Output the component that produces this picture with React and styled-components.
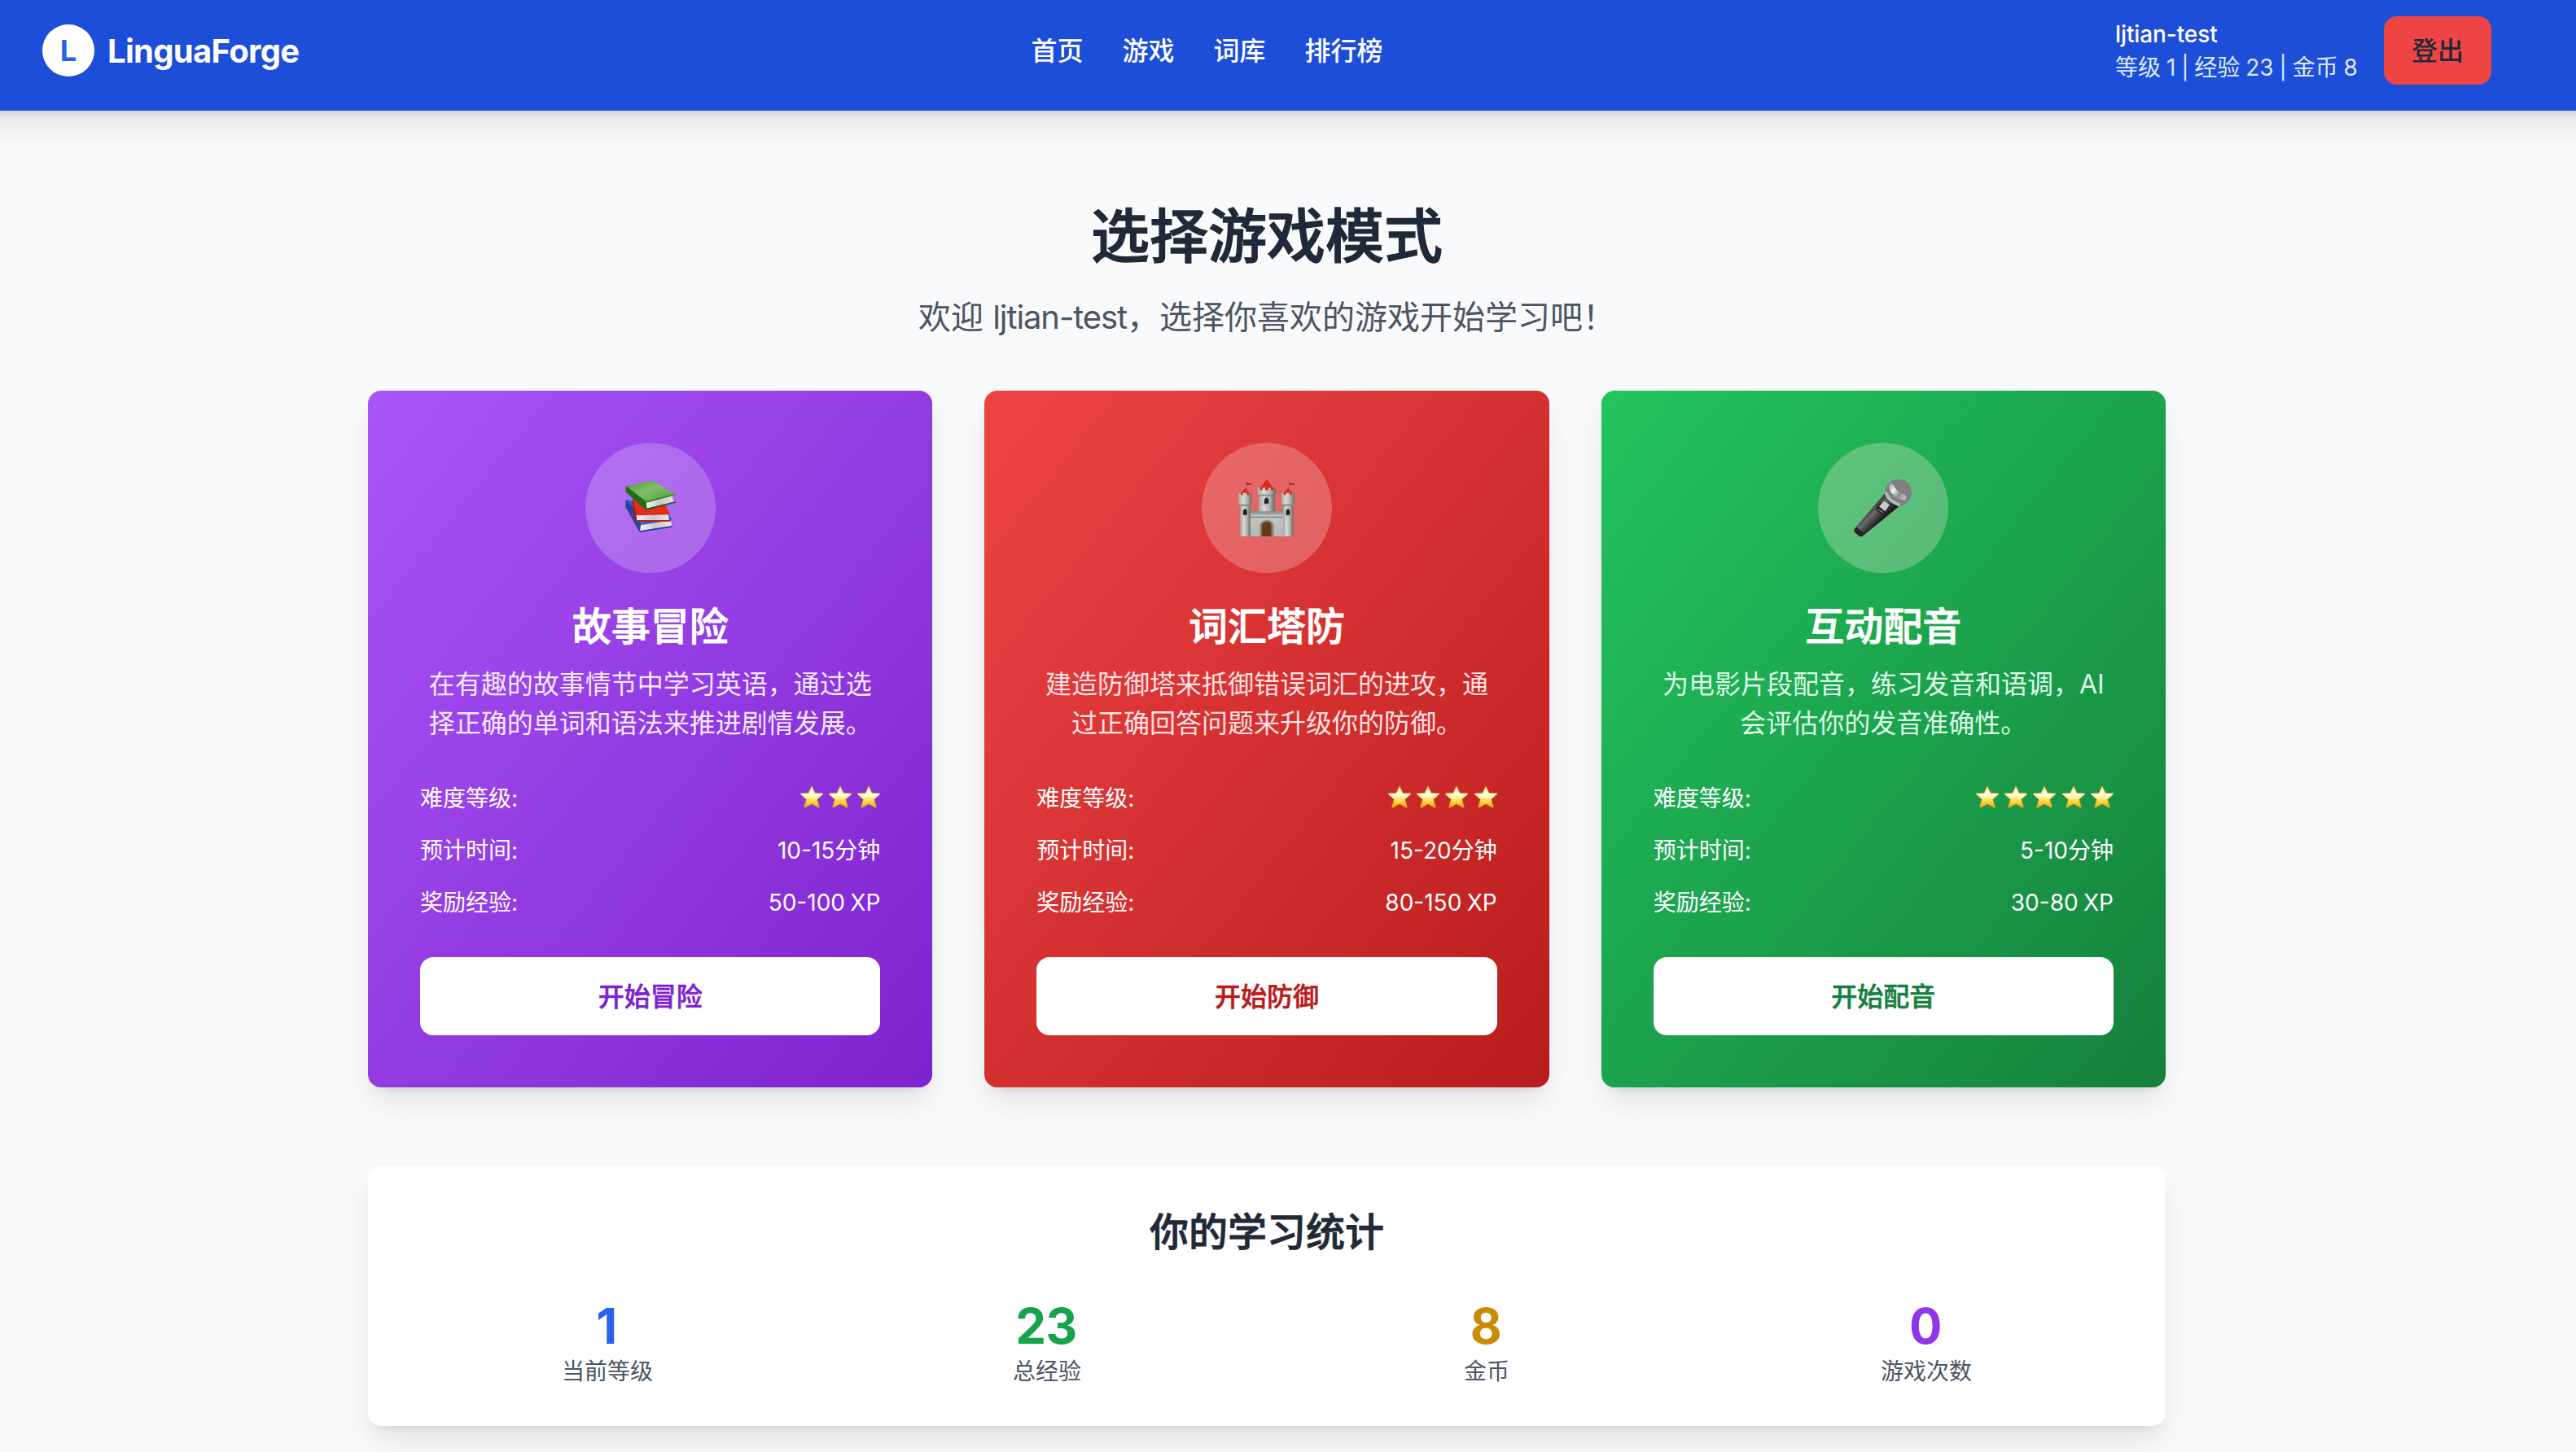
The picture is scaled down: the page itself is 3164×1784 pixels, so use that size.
import React from "react";
import styled, { createGlobalStyle, css } from "styled-components";

const GlobalStyle = createGlobalStyle`
  *, *::before, *::after { box-sizing: border-box; }
  html, body { margin: 0; padding: 0; }
  body {
    background: #f9fafb;
    color: #1f2937;
    font-family: Inter, "Noto Sans CJK SC", sans-serif;
    font-size: 32px;
    line-height: 48px;
    overflow: hidden;
    -webkit-font-smoothing: antialiased;
  }
  h1, h2, h3, p { margin: 0; }
  button { font-family: inherit; cursor: pointer; }
`;

const elevation = css`
  box-shadow: 0 20px 36px -6px rgba(0, 0, 0, 0.11), 0 8px 12px -8px rgba(0, 0, 0, 0.1);
`;

const semibold = css`
  font-weight: 500;
  -webkit-text-stroke: 0.018em currentColor;
`;

const Page = styled.div`
  height: 1784px;
  overflow: hidden;
`;

const Header = styled.header`
  height: 136px;
  margin: 0 -60px;
  padding: 0 60px;
  background: #1d4ed8;
  color: #fff;
  ${elevation}
`;

const HeaderInner = styled.div`
  width: 3112px;
  padding: 20px 52px 32px;
  display: flex;
  align-items: center;
  justify-content: space-between;
`;

const Brand = styled.div`
  width: 315px;
  display: flex;
  align-items: center;
  gap: 16px;
`;

const BrandMark = styled.span`
  width: 64px;
  height: 64px;
  flex: none;
  border-radius: 50%;
  background: #fff;
  color: #2563eb;
  font-size: 36px;
  font-weight: 700;
  display: flex;
  align-items: center;
  justify-content: center;
`;

const BrandName = styled.span`
  padding-top: 1px;
  font-size: 40px;
  font-weight: 700;
  line-height: 56px;
  letter-spacing: -0.7px;
  white-space: nowrap;
`;

const Nav = styled.nav`
  display: flex;
  gap: 48px;
  padding-top: 2px;
`;

const NavItem = styled.a`
  font-weight: 500;
  white-space: nowrap;
`;

const UserArea = styled.div`
  display: flex;
  align-items: center;
  gap: 32px;
`;

const UserInfo = styled.div`
  width: 298px;
  font-size: 28px;
  line-height: 40px;
  white-space: nowrap;
`;

const UserName = styled.div`
  font-weight: 500;
  letter-spacing: -0.1px;
`;

const UserStats = styled.div`
  padding-top: 1px;
  margin-bottom: -1px;
  color: #dbeafe;
  word-spacing: -1px;
`;

const LogoutButton = styled.button`
  width: 132px;
  height: 84px;
  padding: 2px 0 0;
  border: 0;
  border-radius: 16px;
  background: #ef4444;
  color: #1f2937;
  font-size: 32px;
  font-weight: 500;
  line-height: 48px;
`;

const Main = styled.main`
  width: 2208px;
  margin-left: 452px;
  padding-top: 106px;
`;

const Intro = styled.section`
  text-align: center;
  margin-bottom: 62px;
`;

const Title = styled.h1`
  font-size: 72px;
  line-height: 96px;
  ${semibold}
`;

const Subtitle = styled.p`
  margin-top: 24px;
  font-size: 40px;
  line-height: 56px;
  color: #4b5563;
`;

const SubtitleName = styled.span`
  letter-spacing: -1.1px;
`;

const CardGrid = styled.section`
  display: grid;
  grid-template-columns: repeat(3, 1fr);
  gap: 64px;
`;

const Card = styled.article`
  height: 856px;
  padding: 64px;
  border-radius: 16px;
  background: linear-gradient(to bottom right, ${(p) => p.$from}, ${(p) => p.$to});
  color: #fff;
  ${elevation}
  display: flex;
  flex-direction: column;
  align-items: stretch;
`;

const IconCircle = styled.div`
  width: 160px;
  height: 160px;
  align-self: center;
  border-radius: 50%;
  background: ${(p) => p.$tint};
  display: flex;
  align-items: center;
  justify-content: center;
`;

const CardTitle = styled.h3`
  margin: 34px 0 15px;
  font-size: 48px;
  line-height: 64px;
  text-align: center;
  ${semibold}
`;

const CardText = styled.p`
  color: ${(p) => p.$color};
  text-align: center;
`;

const Details = styled.div`
  margin: 47px 0 48px;
  display: flex;
  flex-direction: column;
  gap: 24px;
`;

const DetailRow = styled.div`
  height: 40px;
  display: flex;
  justify-content: space-between;
  align-items: center;
  font-size: 28px;
  line-height: 40px;
`;

const DetailText = styled.span`
  padding-top: 2px;
  word-spacing: -1.5px;
`;

const Stars = styled.span`
  display: flex;
  gap: 7.3px;
  height: 31px;
`;

const StartButton = styled.button`
  height: 96px;
  padding: 2px 0 0;
  border: 0;
  border-radius: 16px;
  background: #fff;
  color: ${(p) => p.$color};
  font-size: 32px;
  line-height: 48px;
  ${semibold}
`;

const StatsPanel = styled.section`
  margin-top: 96px;
  height: 320px;
  padding: 50px 48px 46px;
  border-radius: 16px;
  background: #fff;
  ${elevation}
`;

const StatsTitle = styled.h2`
  margin-bottom: 47px;
  font-size: 48px;
  line-height: 64px;
  text-align: center;
  ${semibold}
`;

const StatsGrid = styled.div`
  display: grid;
  grid-template-columns: repeat(4, 1fr);
  gap: 48px;
  text-align: center;
`;

const StatValue = styled.div`
  padding-right: 2px;
  font-size: 60px;
  line-height: 72px;
  font-weight: 700;
  letter-spacing: -0.5px;
  color: ${(p) => p.$color};
`;

const StatLabel = styled.div`
  font-size: 28px;
  line-height: 40px;
  color: #4b5563;
`;

function Books() {
  return (
    <svg width="80" height="80" viewBox="26 42 240 240">
      <defs>
        <linearGradient id="bookGreen" x1="0" y1="0" x2="1" y2="1">
          <stop offset="0" stopColor="#4c9a3a" />
          <stop offset="0.45" stopColor="#80bf68" />
          <stop offset="1" stopColor="#4d9a35" />
        </linearGradient>
        <linearGradient id="bookPages" x1="0" y1="0" x2="1" y2="0">
          <stop offset="0" stopColor="#f4f4f4" />
          <stop offset="0.5" stopColor="#c9c9c9" />
          <stop offset="1" stopColor="#e6e6e6" />
        </linearGradient>
      </defs>
      <path d="M54 134 Q60 128 72 134 L218 190 L226 208 L110 226 Z" fill="#3b5ccc" />
      <path d="M54 134 L54 158 L100 242 L107 252 L110 224 L74 150 Z" fill="#27459b" />
      <path d="M110 226 L222 208 L223 229 L108 247 Z" fill="url(#bookPages)" />
      <path d="M106 247 L226 228 L226 233 L108 252 Z" fill="#263f91" />
      <path d="M80 124 L200 150 L217 184 L92 186 Z" fill="#ea2b1c" />
      <path d="M80 124 L80 162 L90 211 L97 211 L94 184 Z" fill="#a91a12" />
      <path d="M94 187 L212 185 L214 208 L96 208 Z" fill="url(#bookPages)" />
      <path d="M90 207 L220 207 L221 212 L91 213 Z" fill="#bd2017" />
      <path d="M92 183 L217 182 L217 187 L92 189 Z" fill="#d22418" />
      <path d="M56 83 L148 63 Q154 62 160 65 L237 112 L130 140 Z" fill="url(#bookGreen)" />
      <path d="M56 82 Q53 88 55 104 L122 164 Q127 170 133 165 L130 139 Z" fill="#1e6f18" />
      <path d="M131 141 L229 117 Q224 126 232 139 L132 164 Z" fill="url(#bookPages)" />
      <path d="M130 137 L237 110 L238 115 L131 143 Z" fill="#348828" />
      <path d="M127 165 L240 138 L239 143 L130 171 Z" fill="#1d6518" />
    </svg>
  );
}

function CastleTower({ x }) {
  return (
    <g>
      <path d={`M${x + 26} 244 V215`} stroke="#777" strokeWidth="2" />
      <path d={`M${x + 30} 215 l8 7 h14 l-5 5 l-8 1 l-9 1 Z`} fill="#b3202b" />
      <path d={`M${x + 26} 238 L${x + 8} 258 V266 H${x + 42} V258 Z`} fill="#dc2c22" />
      <path d={`M${x + 7} 298 H${x + 44} V417 H${x + 7} Z`} fill="url(#stoneRound)" />
      <path
        d={`M${x} 257 h9 v8 h8 v-8 h15 v8 h8 v-8 h9 V293 L${x + 44} 303 H${x + 5} L${x} 293 Z`}
        fill="url(#stoneRound)"
      />
      <path d={`M${x + 5} 299 h39 v6 h-39 Z`} fill="#858984" />
      <path d={`M${x + 15} 341 v-16 q8 -20 19 0 v16 l-9 6 Z`} fill="#b7bab5" />
      <path d={`M${x + 18} 338 v-15 q7 -16 14 0 v15 Z`} fill="#20211f" />
    </g>
  );
}

function Castle() {
  return (
    <svg width="80" height="80" viewBox="228 192 240 240">
      <defs>
        <linearGradient id="stoneRound" x1="0" x2="1" y1="0" y2="0">
          <stop offset="0" stopColor="#a3a6a0" />
          <stop offset="0.35" stopColor="#d9dbd6" />
          <stop offset="0.7" stopColor="#adb0ab" />
          <stop offset="1" stopColor="#656964" />
        </linearGradient>
        <linearGradient id="stoneWall" x1="0" x2="0" y1="0" y2="1">
          <stop offset="0" stopColor="#7f837f" />
          <stop offset="0.35" stopColor="#bfc2be" />
          <stop offset="1" stopColor="#b5b8b4" />
        </linearGradient>
      </defs>
      <path d="M348 206 L322 240 V250 H374 V240 Z" fill="#d92a22" />
      <path d="M318 258 H377 V330 H318 Z" fill="url(#stoneRound)" />
      <path
        d="M313 238 h10 v9 h9 v-9 h10 v9 h11 v-9 h10 v9 h9 v-9 h9 V260 L375 268 H319 L313 260 Z"
        fill="url(#stoneRound)"
      />
      <path d="M318 266 H376" stroke="#6b6e69" strokeWidth="5" strokeDasharray="7 4" />
      <path d="M335 299 v-17 q12 -20 24 0 v17 l-12 8 Z" fill="#b9bcb7" />
      <path d="M339 296 v-14 q8 -16 16 0 v14 Z" fill="#20211f" />
      <path
        d="M286 318 h10 v7 h8 v-7 h10 v7 h64 v-7 h10 v7 h8 v-7 h12 V417 H286 Z"
        fill="url(#stoneWall)"
      />
      <path d="M288 346 H408" stroke="#666a66" strokeWidth="4" strokeDasharray="7 4" />
      <path d="M288 340 H408" stroke="#c7cac6" strokeWidth="5" />
      <path d="M323 417 V376 Q326 357 348 357 Q370 357 374 376 V417 Z" fill="#858985" />
      <path d="M329 417 V376 Q333 363 347 363 Q362 363 365 376 V417 Z" fill="#6b421c" />
      <path d="M338 417 V368 M347 417 V364 M356 417 V368" stroke="#462a10" strokeWidth="2" />
      <CastleTower x={243} />
      <CastleTower x={401} />
    </svg>
  );
}

function Microphone() {
  return (
    <svg width="80" height="80" viewBox="219 192 240 240">
      <defs>
        <linearGradient id="micBody" gradientUnits="userSpaceOnUse" x1="285" y1="320" x2="325" y2="360">
          <stop offset="0" stopColor="#3a3a3b" />
          <stop offset="0.4" stopColor="#69696b" />
          <stop offset="1" stopColor="#1f1f20" />
        </linearGradient>
        <pattern id="micMesh" width="6" height="6" patternUnits="userSpaceOnUse" patternTransform="rotate(35)">
          <rect width="6" height="6" fill="#a4a6a9" />
          <path d="M0 0 H6 M0 0 V6" stroke="#4e5053" strokeWidth="3" />
        </pattern>
        <linearGradient id="micBand" gradientUnits="userSpaceOnUse" x1="360" y1="228" x2="425" y2="285">
          <stop offset="0" stopColor="#9a9da0" />
          <stop offset="0.3" stopColor="#f2f4f5" />
          <stop offset="0.6" stopColor="#8b8e91" />
          <stop offset="1" stopColor="#d5d8da" />
        </linearGradient>
      </defs>
      <path
        d="M346 258 L398 306 L266 414 Q258 422 248 414 L235 402 Q229 396 235 387 Z"
        fill="url(#micBody)"
      />
      <path d="M235 387 Q229 396 235 402 L248 414 Q258 422 266 414 L263 402 L244 385 Z" fill="#252526" />
      <path
        d="M356 226 C368 204 408 200 429 218 C448 234 449 270 433 286 C426 297 411 304 398 306 L346 262 Q346 240 356 226 Z"
        fill="url(#micMesh)"
      />
      <path d="M360 226 Q369 216 378 230 Q391 257 420 263 Q428 270 420 282 Q405 286 380 268 Q358 248 360 226 Z" fill="url(#micBand)" />
      <path d="M350 250 Q365 284 402 297 L396 307 Q357 291 345 262 Z" fill="#b9bcbf" />
      <path d="M318 303 L342 284 L365 302 L338 341 L311 319 Z" fill="#252526" />
      <path d="M324 307 L342 286 L363 301 L346 325 Z" fill="#c9cacc" />
      <path d="M319 317 L340 330" stroke="#77787a" strokeWidth="4" />
    </svg>
  );
}

function Star() {
  return (
    <svg width="28" height="28" viewBox="36 44 84 84">
      <defs>
        <linearGradient id="starFill" x1="0" x2="0" y1="0" y2="1">
          <stop offset="0" stopColor="#fdf3b4" />
          <stop offset="0.45" stopColor="#fffbd8" />
          <stop offset="0.65" stopColor="#fce353" />
          <stop offset="1" stopColor="#f5a60c" />
        </linearGradient>
      </defs>
      <path
        d="M78 46 L90 72 L118 73 Q121 75 118 78 L98 96 L106 123 Q105 127 101 125 L78 112 L55 125 Q51 127 50 123 L58 96 L38 78 Q35 75 38 73 L66 72 Z"
        fill="url(#starFill)"
        stroke="#e39a18"
        strokeWidth="2"
        strokeLinejoin="round"
      />
    </svg>
  );
}

const GAMES = [
  {
    title: "故事冒险",
    text: "在有趣的故事情节中学习英语，通过选择正确的单词和语法来推进剧情发展。",
    Icon: Books,
    stars: 3,
    time: "10-15分钟",
    reward: "50-100 XP",
    action: "开始冒险",
    from: "#a855f7",
    to: "#7e22ce",
    soft: "#f3e8ff",
    tint: "rgba(255, 255, 255, 0.21)",
  },
  {
    title: "词汇塔防",
    text: "建造防御塔来抵御错误词汇的进攻，通过正确回答问题来升级你的防御。",
    Icon: Castle,
    stars: 4,
    time: "15-20分钟",
    reward: "80-150 XP",
    action: "开始防御",
    from: "#ef4444",
    to: "#b91c1c",
    soft: "#fee2e2",
    tint: "rgba(255, 255, 255, 0.23)",
  },
  {
    title: "互动配音",
    text: "为电影片段配音，练习发音和语调，AI会评估你的发音准确性。",
    Icon: Microphone,
    stars: 5,
    time: "5-10分钟",
    reward: "30-80 XP",
    action: "开始配音",
    from: "#22c55e",
    to: "#15803d",
    soft: "#dcfce7",
    tint: "rgba(255, 236, 225, 0.28)",
  },
];

const STATS = [
  { value: "1", label: "当前等级", color: "#2563eb" },
  { value: "23", label: "总经验", color: "#16a34a" },
  { value: "8", label: "金币", color: "#ca8a04" },
  { value: "0", label: "游戏次数", color: "#9333ea" },
];

function GameCard({ game }) {
  const { Icon } = game;
  return (
    <Card $from={game.from} $to={game.to}>
      <IconCircle $tint={game.tint}>
        <Icon />
      </IconCircle>
      <CardTitle>{game.title}</CardTitle>
      <CardText $color={game.soft}>{game.text}</CardText>
      <Details>
        <DetailRow>
          <DetailText>难度等级:</DetailText>
          <Stars>
            {Array.from({ length: game.stars }, (_, i) => (
              <Star key={i} />
            ))}
          </Stars>
        </DetailRow>
        <DetailRow>
          <DetailText>预计时间:</DetailText>
          <DetailText>{game.time}</DetailText>
        </DetailRow>
        <DetailRow>
          <DetailText>奖励经验:</DetailText>
          <DetailText>{game.reward}</DetailText>
        </DetailRow>
      </Details>
      <StartButton $color={game.to}>{game.action}</StartButton>
    </Card>
  );
}

export default function App() {
  return (
    <Page lang="zh-CN">
      <GlobalStyle />
      <Header>
        <HeaderInner>
          <Brand>
            <BrandMark>L</BrandMark>
            <BrandName>LinguaForge</BrandName>
          </Brand>
          <Nav>
            <NavItem>首页</NavItem>
            <NavItem>游戏</NavItem>
            <NavItem>词库</NavItem>
            <NavItem>排行榜</NavItem>
          </Nav>
          <UserArea>
            <UserInfo>
              <UserName>ljtian-test</UserName>
              <UserStats>等级 1 | 经验 23 | 金币 8</UserStats>
            </UserInfo>
            <LogoutButton>登出</LogoutButton>
          </UserArea>
        </HeaderInner>
      </Header>
      <Main>
        <Intro>
          <Title>选择游戏模式</Title>
          <Subtitle>
            欢迎 <SubtitleName>ljtian-test</SubtitleName>，选择你喜欢的游戏开始学习吧！
          </Subtitle>
        </Intro>
        <CardGrid>
          {GAMES.map((game) => (
            <GameCard key={game.title} game={game} />
          ))}
        </CardGrid>
        <StatsPanel>
          <StatsTitle>你的学习统计</StatsTitle>
          <StatsGrid>
            {STATS.map((stat) => (
              <div key={stat.label}>
                <StatValue $color={stat.color}>{stat.value}</StatValue>
                <StatLabel>{stat.label}</StatLabel>
              </div>
            ))}
          </StatsGrid>
        </StatsPanel>
      </Main>
    </Page>
  );
}
